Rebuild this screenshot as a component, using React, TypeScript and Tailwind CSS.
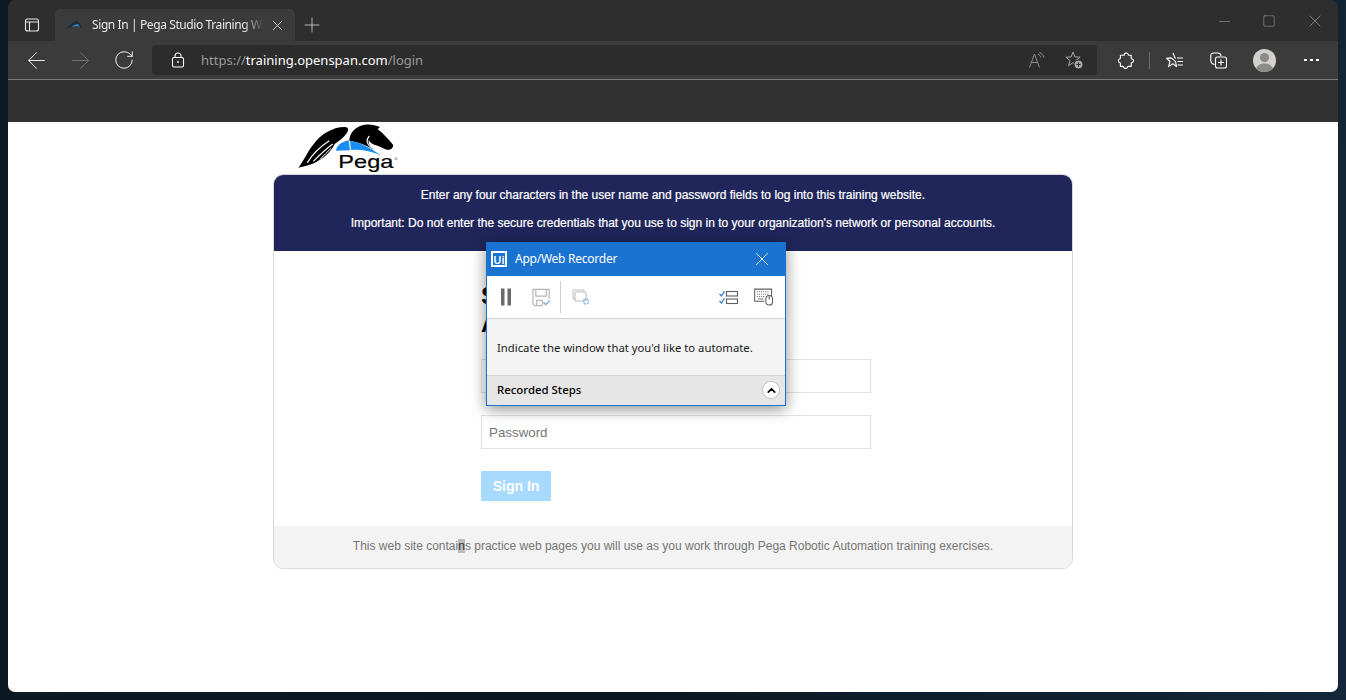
import { ArrowLeft, ArrowRight, RotateCw, X, Plus, Minus, Square, ChevronUp } from "lucide-react";

const sans = "font-['Liberation_Sans',Arial,sans-serif]";
const ui = "font-['Noto_Sans','Open_Sans',sans-serif]";

function PegaLogo() {
  return (
    <svg width="105" height="52" viewBox="75 6 315 156" className="ml-[22px] block">
      {/* wing */}
      <path d="M85 143 C102 122 112 94 134 68 C152 44 188 20 226 21 C236 22 236 31 231 38 C222 52 208 62 194 72 C186 92 158 120 126 132 C110 138 96 141 85 143 Z" fill="#000" />
      <path d="M112 128 C126 104 150 80 178 62" stroke="#fff" strokeWidth="3.5" fill="none" />
      <path d="M130 124 C146 108 164 90 188 72" stroke="#fff" strokeWidth="3.5" fill="none" />
      <path d="M150 118 C162 106 172 96 184 84" stroke="#fff" strokeWidth="3" fill="none" />
      {/* horse */}
      <path d="M238 62 C238 40 256 18 285 14 C300 12 314 14 330 21 L323 28 C340 40 355 58 369 74 C371 83 362 91 350 89 C340 87 330 79 318 76 C308 73 300 68 296 60 C294 70 300 80 312 90 C295 78 272 68 238 62 Z" fill="#000" />
      <path d="M298 48 C287 60 289 72 305 84" stroke="#fff" strokeWidth="3.5" fill="none" />
      {/* blue band */}
      <path d="M198 92 C200 78 212 66 236 61 L240 91 Z" fill="#1a8df0" />
      <path d="M240 63 C265 66 300 82 332 106 C305 94 275 88 243 90 Z" fill="#1a8df0" />
      <text x="205" y="143" fontSize="56" textLength="165" lengthAdjust="spacingAndGlyphs" fill="#000" stroke="#000" strokeWidth="0.6" fontFamily="'Liberation Sans',Arial,sans-serif">Pega</text>
      <circle cx="378" cy="116" r="3" fill="none" stroke="#000" strokeWidth="1" />
    </svg>
  );
}

function TabFavicon() {
  return (
    <svg width="16" height="8" viewBox="0 0 16 8">
      <path d="M0 8 C3 4 7 1 11 0 C13 1 15 5 16 7 C12 5 6 5 0 8 Z" fill="#1c2b38" />
      <path d="M5 6 C7 4 10 3 12 3 L14 6 C11 5 8 5 5 6 Z" fill="#2680c9" />
    </svg>
  );
}

function SidebarIcon() {
  return (
    <svg width="16" height="16" viewBox="0 0 16 16" fill="none" stroke="#e6e6e6" strokeWidth="1.1">
      <rect x="1.5" y="2" width="13" height="12" rx="2" />
      <path d="M1.5 5h13M5.5 5v9" />
    </svg>
  );
}

function LockIcon() {
  return (
    <svg width="14" height="16" viewBox="0 0 14 16" fill="none" stroke="#fff" strokeWidth="1.1">
      <rect x="1.5" y="5.5" width="11" height="9.5" rx="1.5" />
      <path d="M4 5.5V4a3 3 0 0 1 6 0v1.5" />
      <circle cx="7" cy="10" r="0.9" fill="#fff" stroke="none" />
    </svg>
  );
}

function ReadAloudIcon() {
  return (
    <svg width="16" height="16" viewBox="0 0 16 16" fill="none" stroke="#8c8c8c" strokeWidth="1">
      <path d="M0.5 15.5 L5.5 2 L10.5 15.5 M2.3 10.5h6.4" />
      <path d="M9 2 C10.5 2.8 11.5 4 12 5.5M10.5 0.5 C13 1.5 14.5 3.5 15 5.5" />
    </svg>
  );
}

function StarPlusIcon() {
  return (
    <svg width="18" height="18" viewBox="0 0 18 18" fill="none" stroke="#a6a6a6" strokeWidth="1">
      <path d="M8 1 L9.9 5.9 L15.1 6.2 L11 9.5 L12.4 14.6 L8 11.7 L3.6 14.6 L5 9.5 L0.9 6.2 L6.1 5.9 Z" strokeLinejoin="round" />
      <circle cx="13.5" cy="13.5" r="4.5" fill="#a6a6a6" stroke="#2c2c2c" strokeWidth="1" />
      <path d="M13.5 11.5v4M11.5 13.5h4" stroke="#2c2c2c" strokeWidth="1.1" />
    </svg>
  );
}

function PuzzleIcon() {
  return (
    <svg width="16" height="17" viewBox="0 0 16 17" fill="none" stroke="#fff" strokeWidth="1.1" strokeLinejoin="round">
      <path d="M6.3 3 C5.6 1.2 9.4 0 10 2.2 C10.2 3 10.4 3.3 11 3.3 H13.2 V6.2 C13.2 6.8 13.4 7 14 7 C16 7.2 16 10.3 14 10.5 C13.4 10.6 13.2 10.8 13.2 11.4 V14.4 H10.4 C9.8 14.4 9.6 14.7 9.4 15.2 C8.7 16.8 6.3 16.8 5.7 15.2 C5.5 14.7 5.3 14.4 4.7 14.4 H2.4 V11.6 C2.4 11 2.2 10.8 1.6 10.6 C0 10 0 7.4 1.6 6.9 C2.2 6.7 2.4 6.5 2.4 5.9 V3.3 H5.4 C6.1 3.3 6.4 3.3 6.3 3 Z" />
    </svg>
  );
}

function FavoritesIcon() {
  return (
    <svg width="18" height="16" viewBox="0 0 18 16" fill="none" stroke="#fff" strokeWidth="1.1">
      <path d="M7 1 L8.9 5.9 L10 6 M9.6 9.7 L10.4 14.6 L7 11.7 L2.6 14.6 L4 9.5 L0.5 6.2 L5.1 5.9 Z" strokeLinejoin="round" />
      <path d="M11 6h6M11.5 9.5h5.5M11.5 13h5.5" />
    </svg>
  );
}

function CollectionsIcon() {
  return (
    <svg width="17" height="17" viewBox="0 0 17 17" fill="none" stroke="#fff" strokeWidth="1.1">
      <path d="M4.5 12.5 C2 12 1 11 0.8 9 L0.8 3.5 C0.8 1.8 2 1 3.5 1 H8 C10 1 10.8 2 11 4" />
      <rect x="5.5" y="5" width="11" height="11" rx="2" />
      <path d="M11 7.5v6M8 10.5h6" />
    </svg>
  );
}

function Avatar() {
  return (
    <svg width="23" height="23" viewBox="0 0 23 23">
      <circle cx="11.5" cy="11.5" r="11.5" fill="#d3d1ce" />
      <circle cx="11.5" cy="8.5" r="4.6" fill="#8d8b88" />
      <path d="M3 19.5 C5 15.5 8 14.5 11.5 14.5 C15 14.5 18 15.5 20 19.5 C18 21.8 15 23 11.5 23 C8 23 5 21.8 3 19.5 Z" fill="#8d8b88" />
    </svg>
  );
}

function UiLogo() {
  return (
    <span className={`flex h-[16px] w-[16px] items-center justify-center border-2 border-white text-[11px] font-semibold leading-none text-white ${ui}`}>Ui</span>
  );
}

function PauseIcon() {
  return (
    <svg width="12" height="18" viewBox="0 0 12 18">
      <rect x="1" y="0.5" width="3.5" height="17" fill="#6b6b6b" />
      <rect x="7.5" y="0.5" width="3.5" height="17" fill="#6b6b6b" />
    </svg>
  );
}

function SaveIcon() {
  return (
    <svg width="19" height="19" viewBox="0 0 20 19" fill="none">
      <path d="M11 18 H3 L1 16 V1 H18 V11" stroke="#b4b4b4" strokeWidth="1.2" />
      <path d="M4 1.5 V8 H15 V1.5" stroke="#b4b4b4" strokeWidth="1.2" />
      <path d="M5 18 V12.5 H11 V18" stroke="#b4b4b4" strokeWidth="1.2" />
      <path d="M12 14.5 L14.5 17 L19 12.5" stroke="#6ea6dc" strokeWidth="1.2" />
    </svg>
  );
}

function WindowsRefreshIcon() {
  return (
    <svg width="18" height="16" viewBox="0 0 18 16" fill="none">
      <rect x="1" y="1" width="11" height="9" rx="1" stroke="#bdbdbd" strokeWidth="1.1" />
      <rect x="3" y="3" width="11" height="9" rx="1" fill="#fff" stroke="#bdbdbd" strokeWidth="1.1" />
      <circle cx="14" cy="12.5" r="2.6" stroke="#7fb2e5" strokeWidth="1.2" strokeDasharray="3 1" />
    </svg>
  );
}

function StepsIcon() {
  return (
    <svg width="19" height="15" viewBox="0 0 19 15" fill="none">
      <path d="M0.5 4 L2.5 6 L5.5 1" stroke="#2f7fce" strokeWidth="1.3" />
      <path d="M0.5 11 L2.5 13 L5.5 8" stroke="#2f7fce" strokeWidth="1.3" />
      <rect x="7.5" y="1.5" width="11" height="4.5" stroke="#5e5e5e" strokeWidth="1.1" />
      <rect x="7.5" y="9" width="11" height="4.5" stroke="#5e5e5e" strokeWidth="1.1" />
    </svg>
  );
}

function KeyboardMouseIcon() {
  return (
    <svg width="19" height="18" viewBox="0 0 20 18" fill="none">
      <path d="M11 13.5 H0.7 V0.7 H18.5 V8" stroke="#5e5e5e" strokeWidth="1.1" />
      <path d="M3 3.5h13M3 6h13M3 8.5h8" stroke="#7a7a7a" strokeWidth="1.1" strokeDasharray="1.2 1" />
      <path d="M4 11h6" stroke="#7a7a7a" strokeWidth="1.1" />
      <rect x="12.5" y="7.5" width="7" height="10" rx="3.4" fill="#fff" stroke="#5e5e5e" strokeWidth="1.1" />
      <path d="M16 8v3.5" stroke="#5e5e5e" strokeWidth="1.1" />
    </svg>
  );
}

function Recorder() {
  return (
    <div className={`absolute left-[478px] top-[120px] z-10 flex h-[164px] w-[300px] flex-col border border-[#1a73d0] bg-[#f3f3f3] shadow-[0_3px_14px_rgba(0,0,0,0.45)] ${ui}`}>
      <div className="flex h-[33px] shrink-0 items-center bg-[#1a73d0] pb-[1px] pl-[4px] pr-[12px] text-white">
        <UiLogo />
        <span className="ml-[8px] pb-[1px] text-[12px] tracking-[-0.25px]">App/Web Recorder</span>
        <X className="ml-auto h-[22px] w-[22px]" strokeWidth={1} />
      </div>
      <div className="flex h-[43px] shrink-0 items-center border-b border-[#d2d2d2] bg-white pl-[13px] pr-[12px]">
        <PauseIcon />
        <span className="ml-[20px]"><SaveIcon /></span>
        <span className="ml-[9px] h-[32px] w-px bg-[#cfcfcf]" />
        <span className="ml-[11px]"><WindowsRefreshIcon /></span>
        <span className="ml-auto"><StepsIcon /></span>
        <span className="ml-[16px]"><KeyboardMouseIcon /></span>
      </div>
      <div className="flex flex-1 items-center pl-[10px] pt-[2px] text-[11.3px] text-[#1a1a1a]">Indicate the window that you'd like to automate.</div>
      <div className="flex h-[30px] shrink-0 items-center border-t border-[#d6d6d6] bg-[#e6e6e6] pb-[1px] pl-[10px] pr-[5px] text-[11.4px] font-medium text-black">
        Recorded Steps
        <span className="ml-auto flex h-[18px] w-[18px] items-center justify-center rounded-full border border-[#c4c4c4] bg-white">
          <ChevronUp className="h-[13px] w-[13px]" strokeWidth={3} />
        </span>
      </div>
    </div>
  );
}

function Browser() {
  return (
    <div className={`shrink-0 ${ui}`}>
      <div className="flex h-[41px] items-end bg-[#2e2e2e]">
        <span className="ml-[16px] mb-[8px]"><SidebarIcon /></span>
        <div className="ml-[15px] flex h-[32px] w-[240px] items-center rounded-t-[5px] bg-[#3b3b3b] pl-[11px] pr-[9px]">
          <TabFavicon />
          <span className="ml-[10px] w-[172px] overflow-hidden whitespace-nowrap text-[12px] tracking-[-0.4px] text-[#e8e8e8] [mask-image:linear-gradient(to_right,#000_88%,transparent)]">Sign In | Pega Studio Training Website</span>
          <X className="ml-auto h-[17px] w-[17px] text-[#e0e0e0]" strokeWidth={1.2} />
        </div>
        <Plus className="ml-[5px] mb-[4px] h-[24px] w-[24px] text-[#d8d8d8]" strokeWidth={0.8} />
        <div className="ml-auto mb-[10px] flex items-center text-[#8f8f8f]">
          <Minus className="h-[17px] w-[17px]" strokeWidth={1} />
          <Square className="ml-[29px] h-[14px] w-[14px]" strokeWidth={1.1} />
          <X className="ml-[29px] mr-[13px] h-[20px] w-[20px]" strokeWidth={1} />
        </div>
      </div>
      <div className="flex h-[39px] items-center border-b border-[#7c7c7c] bg-[#3b3b3b]">
        <ArrowLeft className="ml-[15px] h-[27px] w-[27px] text-white" strokeWidth={0.8} />
        <ArrowRight className="ml-[17px] h-[27px] w-[27px] text-[#777]" strokeWidth={0.8} />
        <RotateCw className="ml-[19px] h-[22px] w-[22px] text-white" strokeWidth={1} />
        <div className="ml-[17px] flex h-[30px] w-[945px] items-center rounded-[4px] bg-[#2c2c2c] pl-[19px] pr-[14px] text-[13px]">
          <LockIcon />
          <span className="ml-[16px] pt-[1px] text-[#9a9a9a]">https://<span className="text-white">training.openspan.com</span>/login</span>
          <span className="ml-auto"><ReadAloudIcon /></span>
          <span className="ml-[20px]"><StarPlusIcon /></span>
        </div>
        <span className="ml-[21px]"><PuzzleIcon /></span>
        <span className="ml-[15px] h-[17px] w-px bg-[#6a6a6a]" />
        <span className="ml-[16px]"><FavoritesIcon /></span>
        <span className="ml-[26px]"><CollectionsIcon /></span>
        <span className="ml-[26px]"><Avatar /></span>
        <span className="ml-[28px] flex gap-[3px]">
          <i className="h-[2px] w-[3px] bg-white" />
          <i className="h-[2px] w-[3px] bg-white" />
          <i className="h-[2px] w-[3px] bg-white" />
        </span>
      </div>
      <div className="h-[42px] bg-[#323232]" />
    </div>
  );
}

function LoginPage() {
  return (
    <div className={`relative flex-1 bg-white ${sans}`}>
      <div className="h-[52px] pl-[265px]">
        <PegaLogo />
      </div>
      <div className="ml-[265px] w-[800px] overflow-hidden rounded-[10px] border border-[#d9d9d9]">
        <div className="flex h-[76px] flex-col items-center bg-[#20265a] pt-[12px] text-[12px] leading-[16px] text-white [-webkit-text-stroke:0.2px_#fff]">
          <p>Enter any four characters in the user name and password fields to log into this training website.</p>
          <p className="mt-[12px]">Important: Do not enter the secure credentials that you use to sign in to your organization's network or personal accounts.</p>
        </div>
        <div className="h-[275px] pl-[207px] pt-[31px]">
          <h1 className="text-[24px] font-bold leading-[28px] text-black">Sign In to<br />Account</h1>
          <input className="mt-[21px] block h-[34px] w-[390px] border border-[#e3e3e3] px-[7px] text-[13.33px]" placeholder="User Name" />
          <input className="mt-[22px] block h-[34px] w-[390px] border border-[#e3e3e3] px-[7px] text-[13.33px] placeholder:text-[#757575]" placeholder="Password" />
          <button className="mt-[22px] block h-[30px] w-[70px] bg-[#a8d9ff] text-[14px] font-bold text-white">Sign In</button>
        </div>
        <div className="flex h-[42px] items-center justify-center bg-[#f3f3f3] pb-[2px] text-[12px] text-[#757575]">
          <p>This web site contai<span className="bg-[#bdbdbd] text-[#333]">n</span>s practice web pages you will use as you work through Pega Robotic Automation training exercises.</p>
        </div>
      </div>
      <Recorder />
    </div>
  );
}

export default function App() {
  return (
    <div className="h-[700px] w-[1346px] overflow-hidden bg-[linear-gradient(100deg,#0c1a26,#0a1620_50%,#12283a)] px-[8px] pb-[8px]">
      <div className="flex h-[692px] flex-col overflow-hidden rounded-[7px]">
        <Browser />
        <LoginPage />
      </div>
    </div>
  );
}
